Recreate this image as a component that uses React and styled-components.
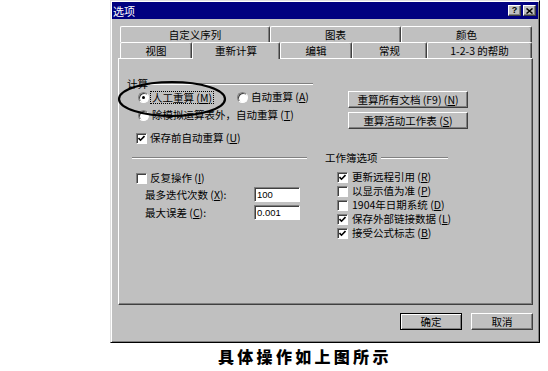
import React from "react";
import styled, { createGlobalStyle, css } from "styled-components";

const GlobalStyle = createGlobalStyle`
  html, body {
    margin: 0;
    padding: 0;
    background: #fff;
  }
  body {
    font-family: "Noto Sans CJK SC", "Liberation Sans", sans-serif;
    color: #000;
  }
`;

const raised = css`
  border: 1px solid;
  border-color: #fff #404040 #404040 #fff;
  box-shadow: inset -1px -1px #808080;
`;

const sunken = css`
  border: 1px solid;
  border-color: #808080 #fff #fff #808080;
  box-shadow: inset 1px 1px #404040;
`;

const Page = styled.div`
  width: 548px;
  height: 371px;
  overflow: hidden;
  padding-left: 110px;
  box-sizing: border-box;
`;

const Dialog = styled.div`
  width: 430px;
  height: 343px;
  box-sizing: border-box;
  background: #c0c0c0;
  border: 1px solid;
  border-color: #dfdfdf #000 #000 #dfdfdf;
  box-shadow: inset 1px 1px #fff, inset -1px -1px #808080;
  padding: 1px;
  display: flex;
  flex-direction: column;
`;

const TitleBar = styled.div`
  height: 17px;
  background: #000080;
  color: #fff;
  display: flex;
  align-items: center;
  padding: 0 2px 0 1px;
  font-size: 11px;
`;

const TitleButtons = styled.div`
  margin-left: auto;
  display: flex;
  gap: 2px;
`;

const TitleButton = styled.div`
  width: 13px;
  height: 11px;
  box-sizing: border-box;
  background: #c0c0c0;
  ${raised};
  display: flex;
  align-items: center;
  justify-content: center;
  color: #000;
  font-family: "Liberation Sans", sans-serif;
  font-weight: bold;
  font-size: 9px;
  line-height: 9px;
`;

const Body = styled.div`
  flex: 1;
  display: flex;
  flex-direction: column;
  padding: 7px 5px 0 6px;
`;

const TabRow = styled.div`
  display: flex;
  margin: 0 1px 0 2px;
`;

const Tab = styled.div`
  box-sizing: border-box;
  width: ${(p) => p.$w}px;
  height: ${(p) => (p.$active ? 17 : 16)}px;
  margin-bottom: ${(p) => (p.$active ? -1 : 0)}px;
  position: relative;
  z-index: ${(p) => (p.$active ? 1 : 0)};
  background: #c0c0c0;
  display: flex;
  align-items: center;
  justify-content: center;
  padding-bottom: ${(p) => (p.$active ? 1 : 0)}px;
  font-size: 10.5px;
  line-height: 12px;
  border-top: 1px solid #fff;
  border-left: 1px solid #fff;
  border-right: 1px solid #404040;
  box-shadow: inset -1px 0 #808080;
  border-radius: 2px 2px 0 0;
`;

const Panel = styled.div`
  height: 247px;
  box-sizing: border-box;
  ${raised};
  display: flex;
  flex-direction: column;
`;

const TopSection = styled.div`
  display: flex;
  padding-top: 19px;
`;

const CalcGroup = styled.div`
  position: relative;
  margin-left: 8px;
  width: 186px;
`;

const GroupTitle = styled.div`
  display: flex;
  align-items: center;
  height: 12px;
  font-size: 10.5px;
  line-height: 12px;
`;

const EtchedLine = styled.div`
  height: 0;
  border-top: 1px solid #808080;
  border-bottom: 1px solid #fff;
  flex: ${(p) => (p.$w ? "none" : 1)};
  width: ${(p) => (p.$w ? `${p.$w}px` : "auto")};
  margin-left: ${(p) => p.$ml || 0}px;
`;

const OptionRow = styled.div`
  display: flex;
  align-items: center;
  height: ${(p) => p.$h || 12}px;
  margin-top: ${(p) => p.$mt || 0}px;
  padding-left: ${(p) => p.$indent || 0}px;
  font-size: 10.5px;
  line-height: 12px;
  white-space: nowrap;
`;

const OptionItem = styled.div`
  display: flex;
  align-items: center;
  width: ${(p) => (p.$w ? `${p.$w}px` : "auto")};
`;

const Radio = styled.span`
  flex: none;
  width: 11px;
  height: 11px;
  box-sizing: border-box;
  border-radius: 50%;
  background: #fff;
  ${sunken};
  display: inline-flex;
  align-items: center;
  justify-content: center;
  margin-right: ${(p) => p.$gap ?? 3}px;
  &::after {
    content: "";
    width: 3px;
    height: 3px;
    border-radius: 50%;
    background: ${(p) => (p.$on ? "#000" : "transparent")};
  }
`;

const Check = styled.span`
  flex: none;
  width: 11px;
  height: 11px;
  box-sizing: border-box;
  background: #fff;
  ${sunken};
  display: inline-flex;
  align-items: center;
  justify-content: center;
  margin-right: ${(p) => p.$gap ?? 3}px;
`;

const FocusLabel = styled.span`
  border: 1px dotted #000;
  padding: 0 1px;
  line-height: 11px;
`;

const Key = styled.span`
  text-decoration: underline;
`;

const Ellipse = styled.svg`
  position: absolute;
  left: -10px;
  top: 0;
  pointer-events: none;
`;

const ButtonColumn = styled.div`
  margin-left: 35px;
  margin-top: 13px;
  display: flex;
  flex-direction: column;
  gap: 4px;
`;

const Button = styled.div`
  width: ${(p) => p.$w}px;
  height: 17px;
  box-sizing: border-box;
  background: #c0c0c0;
  ${raised};
  ${(p) =>
    p.$default &&
    css`
      border: 1px solid #000;
      box-shadow: inset 1px 1px #fff, inset -1px -1px #808080;
    `}
  display: flex;
  align-items: center;
  justify-content: center;
  font-size: 10.5px;
  line-height: 12px;
  white-space: nowrap;
`;

const MidRow = styled.div`
  display: flex;
  align-items: center;
  height: 12px;
  margin-top: 8px;
`;

const WorkbookTitle = styled.div`
  display: flex;
  align-items: center;
  width: 123px;
  margin-left: 18px;
  font-size: 10.5px;
  line-height: 12px;
  white-space: nowrap;
`;

const BottomSection = styled.div`
  display: flex;
`;

const IterCol = styled.div`
  width: 201px;
  padding-left: 17px;
`;

const FieldRow = styled.div`
  display: flex;
  align-items: center;
  height: 15px;
  margin-top: 3px;
  font-size: 10.5px;
  line-height: 12px;
`;

const FieldLabel = styled.span`
  width: 109px;
  padding-left: 9px;
  white-space: nowrap;
`;

const Input = styled.div`
  width: 46px;
  height: 15px;
  box-sizing: border-box;
  background: #fff;
  ${sunken};
  padding-left: 2px;
  font-family: "Liberation Sans", sans-serif;
  font-size: 9.5px;
  line-height: 13px;
`;

const BookCol = styled.div`
  margin-top: 6px;
`;

const Footer = styled.div`
  display: flex;
  justify-content: flex-end;
  gap: 9px;
  margin-top: 8px;
`;

const Caption = styled.div`
  margin-top: 5px;
  padding-left: 108px;
  font-size: 16px;
  line-height: 17px;
  font-weight: 900;
  letter-spacing: 3.3px;
  white-space: nowrap;
`;

function Tick() {
  return (
    <svg width="7" height="7" viewBox="0 0 7 7">
      <polyline points="0.5,3 2.5,5.2 6.5,1" fill="none" stroke="#000" strokeWidth="1.6" />
    </svg>
  );
}

function CheckOption({ on, children, gap, h }) {
  return (
    <OptionRow $h={h}>
      <Check $gap={gap}>{on && <Tick />}</Check>
      <span>{children}</span>
    </OptionRow>
  );
}

const rowOneTabs = [
  { label: "自定义序列", w: 150 },
  { label: "图表", w: 131 },
  { label: "颜色", w: 131 },
];

const rowTwoTabs = [
  { label: "视图", w: 72 },
  { label: "重新计算", w: 88, active: true },
  { label: "编辑", w: 72 },
  { label: "常规", w: 75 },
  { label: "1-2-3 的帮助", w: 105 },
];

const bookOptions = [
  { text: "更新远程引用", key: "R", on: true },
  { text: "以显示值为准", key: "P", on: false },
  { text: "1904年日期系统", key: "D", on: false },
  { text: "保存外部链接数据", key: "L", on: true },
  { text: "接受公式标志", key: "B", on: true },
];

export default function App() {
  return (
    <Page>
      <GlobalStyle />
      <Dialog>
        <TitleBar>
          <span>选项</span>
          <TitleButtons>
            <TitleButton>?</TitleButton>
            <TitleButton>
              <svg width="7" height="6" viewBox="0 0 7 6">
                <path d="M0.5 0.5 L6.5 5.5 M6.5 0.5 L0.5 5.5" stroke="#000" strokeWidth="1.5" />
              </svg>
            </TitleButton>
          </TitleButtons>
        </TitleBar>

        <Body>
          <TabRow>
            {rowOneTabs.map((t) => (
              <Tab key={t.label} $w={t.w}>{t.label}</Tab>
            ))}
          </TabRow>
          <TabRow>
            {rowTwoTabs.map((t) => (
              <Tab key={t.label} $w={t.w} $active={t.active}>{t.label}</Tab>
            ))}
          </TabRow>

          <Panel>
            <TopSection>
              <CalcGroup>
                <GroupTitle>
                  <span>计算</span>
                  <EtchedLine $ml={2} />
                </GroupTitle>
                <OptionRow $mt={1} $indent={11}>
                  <OptionItem $w={99}>
                    <Radio $on $gap={1} />
                    <FocusLabel>人工重算 (<Key>M</Key>)</FocusLabel>
                  </OptionItem>
                  <OptionItem>
                    <Radio />
                    <span>自动重算 (<Key>A</Key>)</span>
                  </OptionItem>
                </OptionRow>
                <OptionRow $mt={6} $indent={11}>
                  <Radio />
                  <span>除模拟运算表外，自动重算 (<Key>T</Key>)</span>
                </OptionRow>
                <OptionRow $mt={11} $indent={9}>
                  <Check><Tick /></Check>
                  <span>保存前自动重算 (<Key>U</Key>)</span>
                </OptionRow>
                <Ellipse width="114" height="42" viewBox="0 0 114 42">
                  <ellipse cx="55" cy="21" rx="53" ry="17" fill="none" stroke="#000" strokeWidth="2.2" />
                </Ellipse>
              </CalcGroup>

              <ButtonColumn>
                <Button $w={120}>重算所有文档 (F9) (<Key>N</Key>)</Button>
                <Button $w={120}>重算活动工作表 (<Key>S</Key>)</Button>
              </ButtonColumn>
            </TopSection>

            <MidRow>
              <EtchedLine $w={175} $ml={13} />
              <WorkbookTitle>
                <span>工作簿选项</span>
                <EtchedLine $ml={3} />
              </WorkbookTitle>
            </MidRow>

            <BottomSection>
              <IterCol>
                <OptionRow $mt={8}>
                  <Check />
                  <span>反复操作 (<Key>I</Key>)</span>
                </OptionRow>
                <FieldRow>
                  <FieldLabel>最多迭代次数 (<Key>X</Key>):</FieldLabel>
                  <Input>100</Input>
                </FieldRow>
                <FieldRow>
                  <FieldLabel>最大误差 (<Key>C</Key>):</FieldLabel>
                  <Input>0.001</Input>
                </FieldRow>
              </IterCol>

              <BookCol>
                {bookOptions.map((o) => (
                  <CheckOption key={o.key} on={o.on} gap={4} h={14}>
                    {o.text} (<Key>{o.key}</Key>)
                  </CheckOption>
                ))}
              </BookCol>
            </BottomSection>
          </Panel>

          <Footer>
            <Button $w={62} $default>确定</Button>
            <Button $w={62}>取消</Button>
          </Footer>
        </Body>
      </Dialog>
      <Caption>具体操作如上图所示</Caption>
    </Page>
  );
}
